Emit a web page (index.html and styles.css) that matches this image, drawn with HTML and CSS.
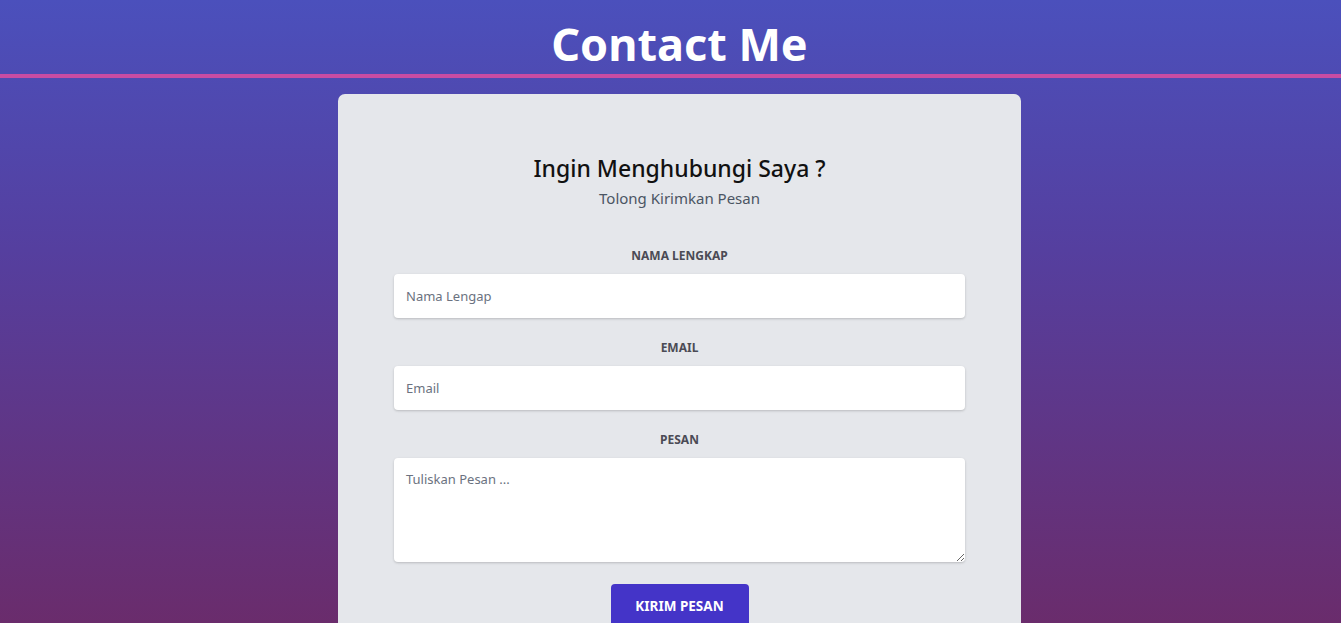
FILE: index.html
```html
<!DOCTYPE html>
<html lang="id">
<head>
<meta charset="utf-8">
<title>Contact Me</title>
<link rel="stylesheet" href="styles.css">
</head>
<body>
<header class="site-header">
  <h1 class="site-title">Contact Me</h1>
</header>
<main class="page">
  <section class="card">
    <div class="intro">
      <h2 class="intro-title">Ingin Menghubungi Saya ?</h2>
      <p class="intro-sub">Tolong Kirimkan Pesan</p>
    </div>
    <form class="form">
      <div class="field">
        <label class="label" for="nama">Nama Lengkap</label>
        <input class="input" id="nama" type="text" placeholder="Nama Lengap">
      </div>
      <div class="field">
        <label class="label" for="email">Email</label>
        <input class="input" id="email" type="email" placeholder="Email">
      </div>
      <div class="field">
        <label class="label" for="pesan">Pesan</label>
        <textarea class="input textarea" id="pesan" placeholder="Tuliskan Pesan ..."></textarea>
      </div>
      <div class="actions">
        <button class="btn" type="button">Kirim Pesan</button>
      </div>
    </form>
  </section>
</main>
</body>
</html>
```

FILE: styles.css
```css
* { box-sizing: border-box; }
html, body { margin: 0; padding: 0; }
body {
  height: 623px;
  overflow: hidden;
  font-family: "Noto Sans", "Open Sans", sans-serif;
  background: linear-gradient(180deg, #4b50bc 0%, #553f9f 40%, #6a2c6c 100%);
}
.site-header {
  height: 78px;
  padding-left: 18px;
  border-bottom: 4px solid #c94ca3;
  display: flex;
  justify-content: center;
  align-items: flex-start;
}
.site-title {
  margin: 0;
  padding-top: 21px;
  color: #fff;
  font-size: 45px;
  line-height: 1;
  font-weight: 700;
}
.page {
  display: flex;
  justify-content: center;
  padding-top: 16px;
  padding-left: 18px;
}
.card {
  width: 683px;
  background: #e5e7eb;
  border-radius: 7px;
  padding: 58px 56px 40px;
}
.intro { text-align: center; }
.intro-title {
  margin: 0;
  font-size: 23px;
  line-height: 32px;
  font-weight: 500;
  color: #111;
}
.intro-sub {
  margin: 2px 0 0;
  font-size: 15px;
  line-height: 24px;
  color: #4b5563;
}
.form {
  margin-top: 36px;
  display: flex;
  flex-direction: column;
  gap: 20px;
}
.field { display: flex; flex-direction: column; }
.label {
  text-align: center;
  text-transform: uppercase;
  font-size: 12px;
  line-height: 20px;
  font-weight: 700;
  color: #4b4b55;
  margin-bottom: 8px;
}
.input {
  height: 44px;
  border: 0;
  border-radius: 4px;
  background: #fff;
  padding: 0 12px;
  font-family: inherit;
  font-size: 13px;
  color: #374151;
  box-shadow: 0 1px 3px rgba(0,0,0,0.12), 0 1px 2px rgba(0,0,0,0.08);
  outline: none;
}
.input::placeholder { color: #6b7280; }
.textarea {
  height: 104px;
  padding: 12px;
  resize: vertical;
  display: block;
}
.actions { display: flex; justify-content: center; margin-top: 2px; }
.btn {
  width: 138px;
  height: 44px;
  border: 0;
  border-radius: 4px;
  background: #4434c8;
  color: #fff;
  font-family: inherit;
  font-size: 13.5px;
  font-weight: 700;
  text-transform: uppercase;
}
```
